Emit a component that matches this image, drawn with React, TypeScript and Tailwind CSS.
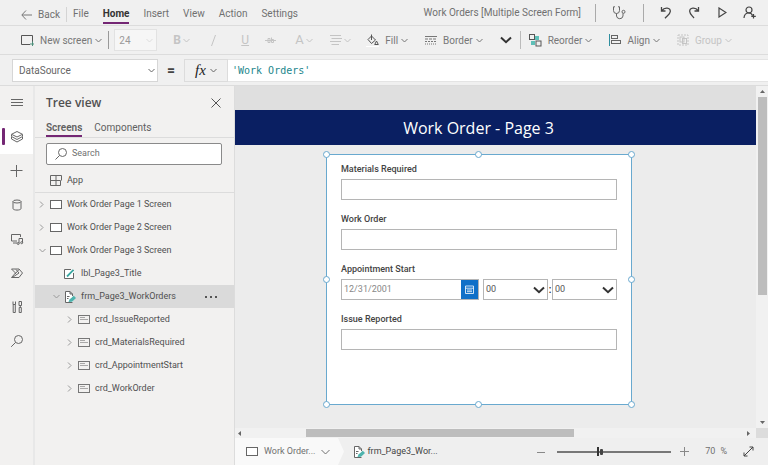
import React from "react";

type Kids = { children?: React.ReactNode };

function Svg({ w, h, cls = "", sw = 1, children }: Kids & { w: number; h: number; cls?: string; sw?: number }) {
  return (
    <svg
      width={w}
      height={h}
      viewBox={`0 0 ${w} ${h}`}
      fill="none"
      stroke="currentColor"
      strokeWidth={sw}
      className={`shrink-0 ${cls}`}
      aria-hidden="true"
    >
      {children}
    </svg>
  );
}

function Chevron({ cls = "" }: { cls?: string }) {
  return (
    <Svg w={7} h={5} cls={cls}>
      <path d="M.5 1 3.5 4 6.5 1" />
    </Svg>
  );
}

function BoldChevron({ cls = "" }: { cls?: string }) {
  return (
    <Svg w={12} h={8} sw={2} cls={`text-[#333] ${cls}`}>
      <path d="M1 1.5 6 6.2 11 1.5" />
    </Svg>
  );
}

function ScreenIcon() {
  return (
    <Svg w={12} h={9} cls="text-[#666]">
      <rect x=".5" y=".5" width="11" height="8" fill="#fff" />
    </Svg>
  );
}

function FormIcon() {
  return (
    <Svg w={12} h={12} cls="text-[#666]">
      <path d="M8.5 11.5H1.5V.5H6L8.5 3V5M6 .5V3H8.5M3 5.5H5.5M3 7.5H4.5" fill="#fff" />
      <path d="M4.5 11 5.5 8.5 9.8 4.8 12 7 8 10.8Z" fill="#4db3ad" stroke="none" />
    </Svg>
  );
}

function LabelIcon() {
  return (
    <Svg w={10} h={10} cls="text-[#666]">
      <path d="M9.5 4V9.5H.5V.5H7" fill="#fff" />
      <path d="M3 7.5 9.5 .8" stroke="#3aa6a0" strokeWidth="1.8" />
    </Svg>
  );
}

function CardIcon() {
  return (
    <Svg w={12} h={9} cls="text-[#777]">
      <rect x=".5" y=".5" width="11" height="8" />
      <path d="M2 2.5H7M2 4.5H10" strokeWidth=".6" />
    </Svg>
  );
}

function TopDivider() {
  return <span className="h-[18px] w-px shrink-0 bg-[#aaa]" />;
}

function Tool({ label, icon, dim, cls = "" }: { label: string; icon: React.ReactNode; dim?: boolean; cls?: string }) {
  return (
    <button type="button" className={`flex shrink-0 items-center ${dim ? "text-[#c4c4c4]" : "text-[#777]"} ${cls}`}>
      {icon}
      <span className="ml-[6px] mr-[3px]">{label}</span>
      <Chevron />
    </button>
  );
}

function MenuBar() {
  const menu = ["File", "Home", "Insert", "View", "Action", "Settings"];
  return (
    <header className="flex h-[26px] shrink-0 items-center border-b border-[#dcdcdc] pl-[21px] pr-3 pt-1 text-[10px] text-[#707070]">
      <button type="button" className="flex items-center gap-[6px]">
        <Svg w={11} h={10} cls="text-[#777]">
          <path d="M11 5H1M5 .5.8 5 5 9.5" />
        </Svg>
        Back
      </button>
      <span className="mx-[6px] h-[15px] w-px shrink-0 bg-[#d4d4d4]" />
      <nav className="flex gap-[14px]">
        {menu.map((m) => (
          <button
            key={m}
            type="button"
            className={
              m === "Home"
                ? "border-b-2 border-[#742774] font-bold leading-[16px] text-[#333]"
                : "border-b-2 border-transparent leading-[16px]"
            }
          >
            {m}
          </button>
        ))}
      </nav>
      <span className="mb-1 ml-auto whitespace-nowrap">Work Orders [Multiple Screen Form]</span>
      <div className="mb-1 ml-[14px] flex items-center text-[#444]">
        <TopDivider />
        <button type="button" aria-label="App checker" className="ml-4">
          <Svg w={14} h={14} cls="text-[#666]">
            <path d="M3 .8H1.5V4.5A3 3 0 0 0 7.5 4.5V.8H6M4.500 7.5V10A3.3 3.3 0 0 0 11 10V7.3" />
            <circle cx="11.5" cy="5.8" r="1.5" />
          </Svg>
        </button>
        <span className="ml-[17px] flex">
          <TopDivider />
        </span>
        <button type="button" aria-label="Undo" className="ml-4">
          <Svg w={12} h={13} sw={1.3}>
            <path d="M1.5 1V5H5.5M1.8 4.8C4.5.8 10.5 1.5 10.3 5.5 10.2 8 7.5 9.5 5 12.3" />
          </Svg>
        </button>
        <button type="button" aria-label="Redo" className="ml-4">
          <Svg w={12} h={13} sw={1.3}>
            <path d="M10.5 1V5H6.5M10.2 4.8C7.5.8 1.5 1.5 1.7 5.5 1.8 8 4 9.5 6 12" />
          </Svg>
        </button>
        <button type="button" aria-label="Preview" className="ml-[18px]">
          <Svg w={9} h={11} sw={1.2}>
            <path d="M1 1 8 5.5 1 10Z" />
          </Svg>
        </button>
        <button type="button" aria-label="Share" className="ml-4">
          <Svg w={13} h={13} sw={1.2}>
            <circle cx="6" cy="4" r="3" />
            <path d="M1 12C1.5 5.5 8 6 9.5 9.5M10.5 8V12.5M8.3 10.3H12.8" />
          </Svg>
        </button>
      </div>
    </header>
  );
}

function Ribbon() {
  return (
    <div className="flex h-[29px] shrink-0 items-center border-b border-[#dcdcdc] pl-[21px] text-[10px] text-[#777]">
      <Tool
        label="New screen"
        icon={
          <Svg w={13} h={11} cls="text-[#555]">
            <path d="M9 9.5H.5V.5H11.5V7" />
            <path d="M11.5 6.5V11M9 9H13" stroke="#4c8f7a" />
          </Svg>
        }
      />
      <span className="ml-[6px] h-[18px] w-px shrink-0 bg-[#999]" />
      <div className="relative ml-[5px] flex shrink-0 items-center">
        <select aria-label="Font size" className="h-[22px] w-[43px] appearance-none border border-[#e2e2e2] bg-[#f6f6f6] pl-1 text-[#999]">
          <option>24</option>
        </select>
        <Chevron cls="pointer-events-none absolute right-1 text-[#ddd]" />
      </div>
      <div className="ml-4 flex shrink-0 items-center text-[#c4c4c4]">
        <button type="button" className="flex w-[38px] items-center gap-[2px]">
          <b className="text-xs">B</b>
          <Chevron />
        </button>
        <button type="button" aria-label="Italic" className="w-[30px]">
          <Svg w={5} h={11}>
            <path d="M4.500 0 .5 11" />
          </Svg>
        </button>
        <button type="button" className="w-[24px] text-left text-xs underline">U</button>
        <button type="button" aria-label="Strikethrough" className="w-[30px]">
          <Svg w={11} h={7}>
            <path d="M0 3.5H11M3 1.5H5V5.5H3ZM6.5.5V5.5H8.5V2.5H6.5" />
          </Svg>
        </button>
        <button type="button" className="flex w-[35px] items-center gap-[2px] text-[13px]">
          A
          <Chevron />
        </button>
        <button type="button" aria-label="Text alignment" className="flex w-[36px] items-center gap-[2px]">
          <Svg w={12} h={10}>
            <path d="M0 .5H11M1.5 3.5H12M0 6.5H11M1.5 9.5H9" />
          </Svg>
          <Chevron />
        </button>
      </div>
      <Tool
        label="Fill"
        icon={
          <Svg w={13} h={13} cls="text-[#555]">
            <path d="M5.5.5V6M2 5.5 5.5 2 9.5 6 5.5 9.5Z" />
            <path d="M10.5 7 12.3 10.5H8.7Z" />
            <path d="M0 12.5H13" stroke="#fff" />
          </Svg>
        }
      />
      <Tool
        label="Border"
        cls="ml-[17px]"
        icon={
          <Svg w={12} h={9} cls="text-[#777]">
            <path d="M0 .5H12" />
            <path d="M0 3H12" strokeDasharray="3 1" />
            <path d="M0 5.5H12" strokeDasharray="2 1" />
            <path d="M0 8H12" strokeDasharray="1 1" />
          </Svg>
        }
      />
      <button type="button" aria-label="More formatting" className="ml-[17px]">
        <BoldChevron />
      </button>
      <span className="ml-2 h-[18px] w-px shrink-0 bg-[#bbb]" />
      <Tool
        label="Reorder"
        cls="ml-2"
        icon={
          <Svg w={13} h={13} cls="text-[#555]">
            <path d="M2 7H6V11H2ZM6 2H10V6H6Z" fill="#5fc0b8" stroke="none" />
            <rect x=".5" y=".5" width="5" height="5" fill="#f0f0f0" />
            <rect x="7" y="7" width="5" height="5" fill="#f0f0f0" />
          </Svg>
        }
      />
      <Tool
        label="Align"
        cls="ml-[17px]"
        icon={
          <Svg w={12} h={12} cls="text-[#666]">
            <path d="M.5 0V12" stroke="#2f8fa0" />
            <rect x="2.5" y="1.5" width="6" height="3" />
            <rect x="2.5" y="6.5" width="9" height="3" />
          </Svg>
        }
      />
      <Tool
        label="Group"
        cls="ml-[17px]"
        dim
        icon={
          <Svg w={12} h={12}>
            <rect x="1" y="1" width="10" height="10" strokeDasharray="2 1" />
            <rect x="3" y="3" width="4" height="5" />
            <rect x="5.5" y="4.5" width="4" height="5" />
          </Svg>
        }
      />
    </div>
  );
}

function FormulaBar() {
  return (
    <div className="flex h-[31px] shrink-0 items-center border-b border-[#dcdcdc] pl-3 text-[10px]">
      <div className="relative flex shrink-0 items-center">
        <select aria-label="Property" className="h-[23px] w-[146px] appearance-none border border-[#d6d6d6] bg-white pl-[6px] text-[#666]">
          <option>DataSource</option>
        </select>
        <Chevron cls="pointer-events-none absolute right-[3px] text-[#666]" />
      </div>
      <span className="w-[26px] shrink-0 text-center text-sm font-bold text-[#444]">=</span>
      <button type="button" aria-label="Function" className="flex h-[23px] w-[44px] shrink-0 items-center justify-center gap-1 border border-[#dcdcdc] text-[#666]">
        <span className="font-['Liberation_Serif',serif] text-[15px] italic leading-none text-[#222]">fx</span>
        <Chevron />
      </button>
      <input
        aria-label="Formula"
        defaultValue="'Work Orders'"
        className="h-[23px] min-w-0 flex-1 border-y border-[#e4e4e4] bg-white pl-1 font-['DejaVu_Sans_Mono',monospace] text-[10px] text-[#22868c]"
      />
    </div>
  );
}

const railIcons: { name: string; art: React.ReactNode }[] = [
  { name: "Menu", art: <path d="M1 3.5H13M1 6.5H13M1 9.5H13" /> },
  { name: "Tree view", art: <path d="M7 1.5 12.5 4.3 7 7 1.5 4.3ZM1.5 4.5V6.5L7 9.5 12.5 6.5V4.5M1.5 7V9L7 12 12.5 9V7" /> },
  { name: "Insert", art: <path d="M6.5 1V13M.5 6.5H12.5" /> },
  {
    name: "Data",
    art: (
      <>
        <ellipse cx="7" cy="3.5" rx="4" ry="1.5" />
        <path d="M3 3.5V10.5C3 12.6 11 12.6 11 10.5V3.5" />
      </>
    ),
  },
  {
    name: "Media",
    art: (
      <>
        <path d="M7 9H1.5V2.5H10.5V5M3 11H7" />
        <path d="M9 11.5V6.5H12.5V10.5" />
        <circle cx="8.2" cy="11.5" r="1" />
        <circle cx="11.7" cy="10.7" r="1" />
      </>
    ),
  },
  { name: "Power Automate", art: <path d="M1.5 3H9L12.5 7 9 11.5H1.5L5.5 7ZM6 3.5 9 7 3 11M9 3.5 5 8" /> },
  {
    name: "Advanced tools",
    art: <path d="M3 1.5V4.5H5.5V1.5M3.2 4.5V12.5H5.3V4.5M9 1.5H11.5V5.5H9ZM10.3 5.5V7M9.2 7.5H11.3V12.5H9.2Z" />,
  },
  {
    name: "Search",
    art: (
      <>
        <circle cx="8.5" cy="5.5" r="4" />
        <path d="M5.5 8.5 1.2 12.8" />
      </>
    ),
  },
];

function Rail() {
  return (
    <nav aria-label="Panels" className="flex w-[35px] shrink-0 flex-col border-r-2 border-[#e8e8e8]">
      {railIcons.map(({ name, art }) => (
        <button
          key={name}
          type="button"
          aria-label={name}
          className={`relative flex h-[34px] w-[33px] items-center justify-center text-[#666] ${name === "Tree view" ? "bg-white" : ""}`}
        >
          {name === "Tree view" && <span className="absolute left-[2px] top-2 h-[17px] w-[3px] rounded-[1px] bg-[#742774]" />}
          <Svg w={14} h={14}>{art}</Svg>
        </button>
      ))}
    </nav>
  );
}

type Row = { label: string; depth: string; open?: boolean; arrow?: boolean; icon: "screen" | "label" | "form" | "card"; on?: boolean };

const rows: Row[] = [
  { label: "Work Order Page 1 Screen", depth: "pl-1", arrow: true, icon: "screen" },
  { label: "Work Order Page 2 Screen", depth: "pl-1", arrow: true, icon: "screen" },
  { label: "Work Order Page 3 Screen", depth: "pl-1", arrow: true, open: true, icon: "screen" },
  { label: "lbl_Page3_Title", depth: "pl-[18px]", icon: "label" },
  { label: "frm_Page3_WorkOrders", depth: "pl-[18px]", arrow: true, open: true, icon: "form", on: true },
  { label: "crd_IssueReported", depth: "pl-8", arrow: true, icon: "card" },
  { label: "crd_MaterialsRequired", depth: "pl-8", arrow: true, icon: "card" },
  { label: "crd_AppointmentStart", depth: "pl-8", arrow: true, icon: "card" },
  { label: "crd_WorkOrder", depth: "pl-8", arrow: true, icon: "card" },
];

function RowIcon({ kind }: { kind: Row["icon"] }) {
  if (kind === "screen") return <ScreenIcon />;
  if (kind === "label") return <LabelIcon />;
  if (kind === "form") return <FormIcon />;
  return <CardIcon />;
}

function TreePanel() {
  return (
    <aside className="flex w-[200px] shrink-0 flex-col border-r border-[#dcdcdc] text-[#505050]">
      <div className="flex h-[34px] shrink-0 items-center justify-between pl-[11px] pr-[13px]">
        <h2 className="font-['Open_Sans',sans-serif] text-xs font-semibold">Tree view</h2>
        <button type="button" aria-label="Close">
          <Svg w={10} h={10} cls="text-[#555]">
            <path d="M.5.5 9.5 9.5M9.5.5.5 9.5" />
          </Svg>
        </button>
      </div>
      <div className="flex shrink-0 gap-3 border-b border-[#dcdcdc] pl-[11px] text-[10px] leading-[15px] text-[#606060]">
        <button type="button" className="border-b-2 border-[#742774] font-semibold">Screens</button>
        <button type="button" className="border-b-2 border-transparent">Components</button>
      </div>
      <label className="ml-[11px] mr-[12px] mt-[5px] flex h-[22px] shrink-0 items-center gap-[4px] rounded-[2px] border border-[#8a8a8a] bg-white pl-2 text-[#666]">
        <Svg w={13} h={12}>
          <circle cx="7.5" cy="4.5" r="4" />
          <path d="M4.5 7.5.5 11.5" />
        </Svg>
        <input aria-label="Search" placeholder="Search" className="min-w-0 flex-1 text-[9px] placeholder:text-[#707070]" />
      </label>
      <button type="button" className="mt-1 flex h-[24px] shrink-0 items-center gap-[5px] border-b border-[#dcdcdc] pl-[15px] text-[9px]">
        <Svg w={12} h={11} cls="text-[#666]">
          <path d="M.5.5H6V10.5H.5ZM.5 5.5H10.5V10.5H6M6 .5H11.5V5.5" />
        </Svg>
        App
      </button>
      <ul className="text-[9px]">
        {rows.map((r) => (
          <li key={r.label} className={`flex h-[23px] items-center ${r.depth} ${r.on ? "bg-[#dadada]" : ""}`}>
            <span className="flex w-[11px] shrink-0 items-center text-[#999]">
              {r.arrow && r.open && <Chevron />}
              {r.arrow && !r.open && (
                <Svg w={5} h={7}>
                  <path d="M1 .5 4 3.5 1 6.5" />
                </Svg>
              )}
            </span>
            <span className="flex w-[17px] shrink-0">
              <RowIcon kind={r.icon} />
            </span>
            <span className="whitespace-nowrap">{r.label}</span>
            {r.on && (
              <button type="button" aria-label="More" className="ml-auto mr-[17px]">
                <svg width="12" height="2" viewBox="0 0 12 2" fill="#555">
                  <path d="M0 0H2V2H0ZM5 0H7V2H5ZM10 0H12V2H10Z" />
                </svg>
              </button>
            )}
          </li>
        ))}
      </ul>
    </aside>
  );
}

function TextField({ label }: { label: string }) {
  return (
    <label className="flex h-[50px] flex-col">
      <span className="h-5 leading-[20px]">{label}</span>
      <input className="h-[21px] w-full border border-[#b5b5b5] bg-white px-[3px] font-normal" />
    </label>
  );
}

function TimeSelect({ name }: { name: string }) {
  return (
    <div className="relative flex min-w-0 flex-1 items-center">
      <select aria-label={name} className="h-[21px] w-full appearance-none border border-[#b5b5b5] bg-white pl-[2px] text-[9px] font-normal text-[#555]">
        <option>00</option>
      </select>
      <BoldChevron cls="pointer-events-none absolute right-[3px]" />
    </div>
  );
}

const handles = [
  "-left-1 -top-1",
  "left-1/2 -ml-1 -top-1",
  "-right-1 -top-1",
  "-left-1 top-1/2 -mt-1",
  "-right-1 top-1/2 -mt-1",
  "-left-1 -bottom-1",
  "left-1/2 -ml-1 -bottom-1",
  "-right-1 -bottom-1",
];

function WorkOrderForm() {
  return (
    <form className="relative ml-[91px] mr-[124px] mt-[9px] h-[251px] border border-[#69a9cf] bg-white px-[14px] pt-1 text-[9px] font-medium text-[#444]">
      <TextField label="Materials Required" />
      <TextField label="Work Order" />
      <div className="flex h-[50px] flex-col">
        <label htmlFor="start" className="h-5 leading-[20px]">Appointment Start</label>
        <div className="flex items-center">
          <div className="flex h-[21px] w-1/2 border border-[#b5b5b5] bg-white">
            <input id="start" defaultValue="12/31/2001" className="min-w-0 flex-1 pl-[2px] font-normal text-[#888]" />
            <button type="button" aria-label="Pick a date" className="flex w-[17px] items-center justify-center bg-[#1070c8] text-white">
              <Svg w={9} h={9} sw={0.8}>
                <path d="M.5 1H8.5V8.5H.5ZM.5 3.2H8.5M2 5H7M2 6.7H7" />
              </Svg>
            </button>
          </div>
          <div className="ml-1 flex min-w-0 flex-1 items-center">
            <TimeSelect name="Hour" />
            <span className="w-[4px] text-center text-[10px] text-[#222]">:</span>
            <TimeSelect name="Minute" />
          </div>
        </div>
      </div>
      <TextField label="Issue Reported" />
      {handles.map((h) => (
        <span key={h} className={`absolute size-[7px] rounded-full border border-[#69a9cf] bg-white ${h}`} />
      ))}
    </form>
  );
}

function Arrow({ d }: { d: string }) {
  return (
    <svg width="7" height="7" viewBox="0 0 7 7" fill="#666" className="shrink-0" aria-hidden="true">
      <path d={d} />
    </svg>
  );
}

function Workspace() {
  return (
    <main className="flex min-w-0 flex-1 flex-col">
      <div className="flex min-h-0 flex-1">
        <section className="min-w-0 flex-1 bg-[#ececec]">
          <div className="h-6 bg-[#dfdfdf]" />
          <h1 className="h-[35px] bg-[#0a1f62] pr-[34px] text-center font-['Open_Sans',sans-serif] text-[16px] leading-[36px] text-white">Work Order - Page 3</h1>
          <WorkOrderForm />
        </section>
        <div className="flex w-3 shrink-0 flex-col items-center bg-[#f1f1f1] py-[2px]">
          <Arrow d="M1 5 3.5 2 6 5Z" />
          <div className="mt-[2px] h-[198px] w-[9px] bg-[#bdbdbd]" />
          <span className="mt-auto">
            <Arrow d="M1 2 3.5 5 6 2Z" />
          </span>
        </div>
      </div>
      <div className="flex h-[10px] shrink-0 items-center bg-[#f1f1f1]">
        <span className="w-[71px] shrink-0 pl-px">
          <Arrow d="M5 1 2 3.5 5 6Z" />
        </span>
        <div className="flex flex-1">
          <div className="h-2 w-[61%] bg-[#bdbdbd]" />
        </div>
        <Arrow d="M2 1 5 3.5 2 6Z" />
        <span className="ml-1 h-full w-3 bg-[#dcdcdc]" />
      </div>
      <footer className="flex h-[27px] shrink-0 items-center bg-[#efefef] text-[9px] text-[#707070]">
        <button type="button" className="flex h-full shrink-0 items-center bg-[#f9f9f9] pl-[11px]">
          <ScreenIcon />
          <span className="ml-[6px] mr-[6px]">Work Order...</span>
          <Svg w={9} h={6}>
            <path d="M.5 1 4.5 5 8.5 1" />
          </Svg>
        </button>
        <svg width="15" height="27" viewBox="0 0 15 27" fill="#f9f9f9" className="shrink-0" aria-hidden="true">
          <path d="M0 0H8L14 13.5 8 27H0Z" />
        </svg>
        <button type="button" className="ml-2 flex shrink-0 items-center gap-[2px] text-[#444]">
          <FormIcon />
          frm_Page3_Wor...
        </button>
        <button type="button" aria-label="Zoom out" className="ml-auto">
          <Svg w={8} h={8} cls="text-[#888]">
            <path d="M0 4.5H8" />
          </Svg>
        </button>
        <div className="relative ml-3 flex w-[114px] shrink-0 items-center">
          <input
            type="range"
            aria-label="Zoom"
            min={10}
            max={180}
            defaultValue={70}
            className="h-[2px] w-full appearance-none bg-[#777] [&::-webkit-slider-thumb]:h-[9px] [&::-webkit-slider-thumb]:w-[2px] [&::-webkit-slider-thumb]:appearance-none [&::-webkit-slider-thumb]:bg-[#333]"
          />
          <span className="pointer-events-none absolute left-[43px] h-[6px] w-[3px] rounded-[1px] bg-[#444]" />
        </div>
        <button type="button" aria-label="Zoom in" className="ml-[9px]">
          <Svg w={9} h={9} cls="text-[#888]">
            <path d="M0 4.5H9M4.5 0V9" />
          </Svg>
        </button>
        <span className="ml-4">70</span>
        <span className="ml-[5px]">%</span>
        <button type="button" aria-label="Fit to window" className="ml-4 mr-[14px]">
          <Svg w={11} h={11} cls="text-[#444]">
            <path d="M1 10 10 1M6.5 1H10V4.5M1 6.5V10H4.5" />
          </Svg>
        </button>
      </footer>
    </main>
  );
}

export default function App() {
  return (
    <div className="flex h-screen flex-col overflow-hidden bg-[#f0f0f0] font-['Roboto','Noto_Sans',sans-serif] [&_svg]:block">
      <MenuBar />
      <Ribbon />
      <FormulaBar />
      <div className="flex min-h-0 flex-1 bg-[#f2f1f0]">
        <Rail />
        <TreePanel />
        <Workspace />
      </div>
    </div>
  );
}
